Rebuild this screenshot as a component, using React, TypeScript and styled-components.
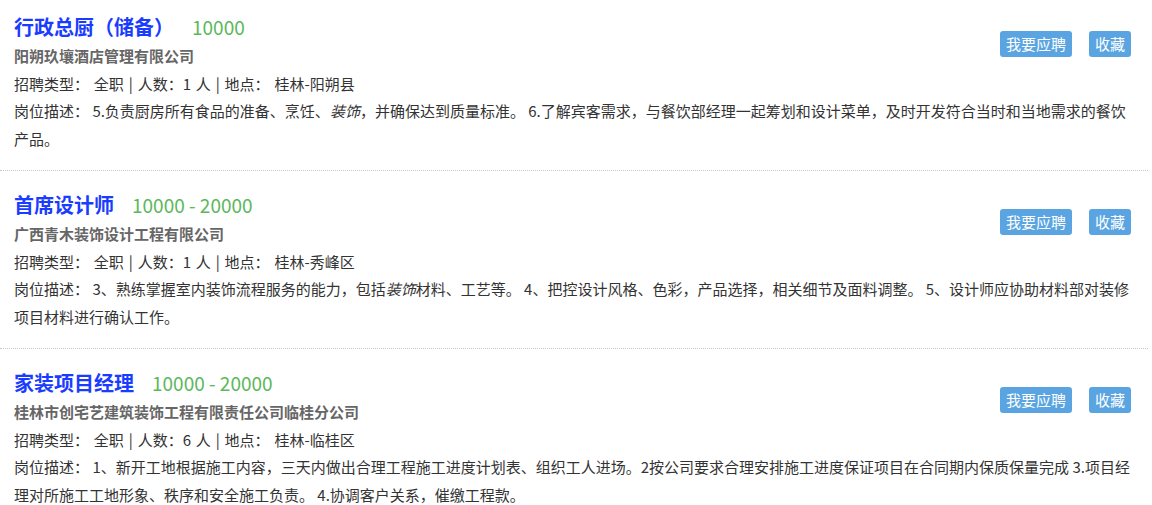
import React from 'react';
import styled, { createGlobalStyle } from 'styled-components';

const GlobalStyle = createGlobalStyle`
  body {
    margin: 0;
    background: #fff;
    font-family: "Noto Sans CJK SC", "Microsoft YaHei", sans-serif;
    color: #333;
  }
`;

type Job = {
  title: string;
  salary: string;
  company: string;
  count: number;
  place: string;
  desc: React.ReactNode;
};

const jobs: Job[] = [
  {
    title: '行政总厨（储备）',
    salary: '10000',
    company: '阳朔玖壤酒店管理有限公司',
    count: 1,
    place: '桂林-阳朔县',
    desc: (
      <>
        5.负责厨房所有食品的准备、烹饪、<em>装饰</em>，并确保达到质量标准。
        6.了解宾客需求，与餐饮部经理一起筹划和设计菜单，及时开发符合当时和当地需求的餐饮产品。
      </>
    ),
  },
  {
    title: '首席设计师',
    salary: '10000 - 20000',
    company: '广西青木装饰设计工程有限公司',
    count: 1,
    place: '桂林-秀峰区',
    desc: (
      <>
        3、熟练掌握室内装饰流程服务的能力，包括<em>装饰</em>材料、工艺等。
        4、把控设计风格、色彩，产品选择，相关细节及面料调整。
        5、设计师应协助材料部对装修项目材料进行确认工作。
      </>
    ),
  },
  {
    title: '家装项目经理',
    salary: '10000 - 20000',
    company: '桂林市创宅艺建筑装饰工程有限责任公司临桂分公司',
    count: 6,
    place: '桂林-临桂区',
    desc: (
      <>
        1、新开工地根据施工内容，三天内做出合理工程施工进度计划表、组织工人进场。2按公司要求合理安排施工进度保证项目在合同期内保质保量完成
        3.项目经理对所施工工地形象、秩序和安全施工负责。 4.协调客户关系，催缴工程款。
      </>
    ),
  },
];

const List = styled.ul`
  list-style: none;
  margin: 0;
  padding: 0;
  width: 1148px;
`;

const Item = styled.li`
  padding: 19px 10px 18px 14px;
  border-bottom: 1px dotted #c8c8c8;

  &:first-child {
    padding-top: 12px;
  }
`;

const Top = styled.div`
  display: flex;
  justify-content: space-between;
  align-items: flex-start;
`;

const Info = styled.div`
  display: flex;
  flex-direction: column;
`;

const TitleRow = styled.div`
  display: flex;
  align-items: baseline;
  height: 30px;
  line-height: 30px;
`;

const Title = styled.a`
  font-size: 20px;
  font-weight: bold;
  color: #1a3cff;
  text-decoration: none;
`;

const Salary = styled.span`
  margin-left: 18px;
  font-size: 19px;
  color: #5cb85c;
`;

const Company = styled.div`
  font-size: 15px;
  font-weight: bold;
  color: #666;
  line-height: 27.5px;
`;

const Line = styled.div`
  font-size: 15px;
  line-height: 27.5px;
  color: #333;

  em {
    font-style: italic;
  }
`;

const Meta = styled(Line)`
  word-spacing: 1.5px;
`;

const Actions = styled.div`
  display: flex;
  gap: 17px;
  margin-top: 19px;
  margin-right: 7px;
`;

const Button = styled.button`
  height: 26px;
  padding: 0 6px;
  border: none;
  border-radius: 3px;
  background: #5aa5e1;
  color: #fff;
  font-family: inherit;
  font-size: 15px;
  line-height: 26px;
  cursor: pointer;
`;

export default function App() {
  return (
    <>
      <GlobalStyle />
      <List>
        {jobs.map((job) => (
          <Item key={job.title}>
            <Top>
              <Info>
                <TitleRow>
                  <Title href="#">{job.title}</Title>
                  <Salary>{job.salary}</Salary>
                </TitleRow>
                <Company>{job.company}</Company>
                <Meta>
                  招聘类型： 全职 | 人数：{job.count} 人 | 地点： {job.place}
                </Meta>
              </Info>
              <Actions>
                <Button>我要应聘</Button>
                <Button>收藏</Button>
              </Actions>
            </Top>
            <Line>岗位描述： {job.desc}</Line>
          </Item>
        ))}
      </List>
    </>
  );
}
